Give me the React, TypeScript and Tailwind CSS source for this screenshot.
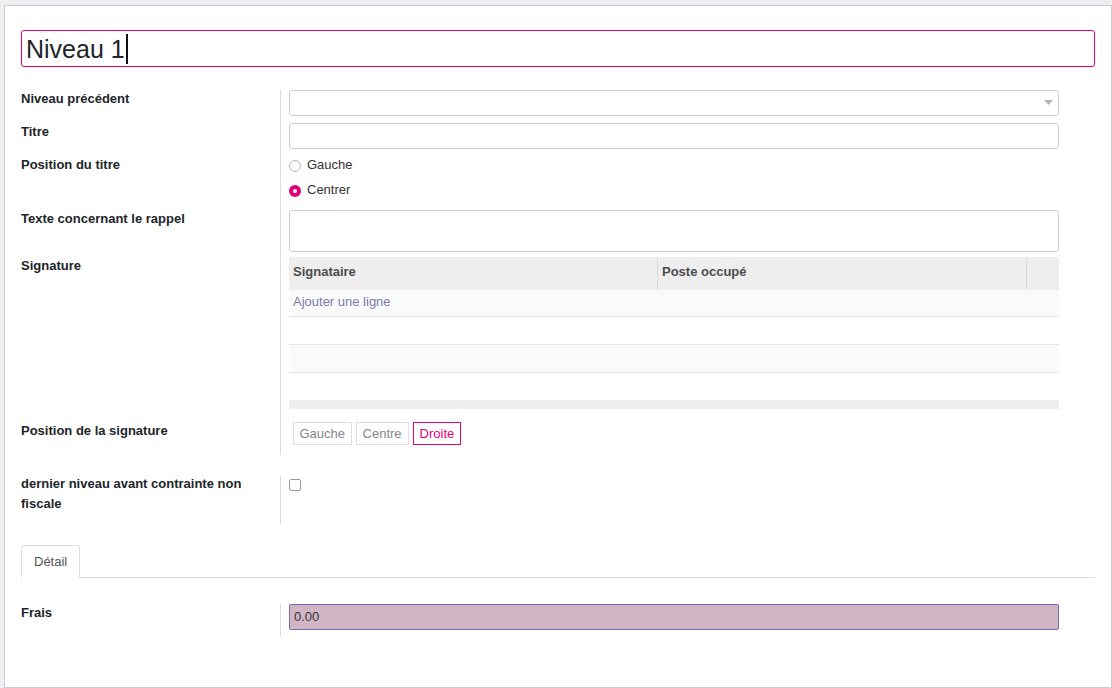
import React from 'react';

const MAGENTA = '#e0007a';

interface RowProps {
  label: React.ReactNode;
  children?: React.ReactNode;
  className?: string;
  labelClass?: string;
}

const Row: React.FC<RowProps> = ({ label, children, className = '', labelClass = 'pt-[1px]' }) => (
  <div className={`flex ${className}`}>
    <div className={`w-[259px] shrink-0 pr-[8px] font-bold text-[13px] leading-[16px] text-[#212529] ${labelClass}`}>
      {label}
    </div>
    <div className="w-[778px] border-l border-[#dcdcdc] pl-[8px]">{children}</div>
  </div>
);

const inputCls = 'h-[26px] w-[770px] border border-[#cfcfcf] rounded-[3px] bg-white';

const App: React.FC = () => {
  return (
    <div
      className="w-[1112px] h-[688px] bg-[#efeff1] pt-[5px] pl-[4px] overflow-hidden"
      style={{ fontFamily: '"Liberation Sans", Arial, sans-serif' }}
    >
      <div className="w-[1108px] h-[683px] bg-white border border-[#cacad2] px-[16px] pt-[24px]">
        {/* title */}
        <div
          className="h-[37px] w-[1074px] rounded-[3px] border flex items-center pl-[4px]"
          style={{ borderColor: MAGENTA }}
        >
          <span className="text-[25px] leading-[30px] text-[#212529]">Niveau 1</span>
          <span className="ml-[1px] w-[2px] h-[30px] bg-[#111]" />
        </div>

        <div className="mt-[23px]">
          <Row label="Niveau précédent" className="h-[33px]">
            <div className={`${inputCls} relative`}>
              <svg className="absolute right-[5px] top-[9px]" width="9" height="6" viewBox="0 0 9 6">
                <path d="M0 0 L9 0 L4.5 5 Z" fill="#b5b5b5" />
              </svg>
            </div>
          </Row>
          <Row label="Titre" className="h-[33px]">
            <div className={inputCls} />
          </Row>
          <Row label="Position du titre" className="h-[54px]">
            <div className="flex flex-col text-[13px] text-[#333] leading-[16px]">
              <label className="flex items-center h-[18px]">
                <span className="w-[12px] h-[12px] rounded-full border border-[#b8b8b8] mt-[2px]" />
                <span className="ml-[6px]">Gauche</span>
              </label>
              <label className="flex items-center h-[18px] mt-[7px]">
                <span
                  className="w-[12px] h-[12px] rounded-full flex items-center justify-center mt-[2px]"
                  style={{ backgroundColor: MAGENTA }}
                >
                  <span className="w-[4px] h-[4px] rounded-full bg-white" />
                </span>
                <span className="ml-[6px]">Centrer</span>
              </label>
            </div>
          </Row>
          <Row label="Texte concernant le rappel" className="h-[47px]">
            <div className="h-[42px] w-[770px] border border-[#cfcfcf] rounded-[3px]" />
          </Row>
          <Row label="Signature" className="h-[165px]">
            <div className="w-[770px] text-[13px]">
              <div className="flex h-[33px] bg-[#eeeeee] font-bold text-[#4c4c4c]">
                <div className="w-[369px] h-full flex items-center pl-[4px] pb-[3px] border-r border-[#dadada]">Signataire</div>
                <div className="w-[369px] h-full flex items-center pl-[4px] pb-[3px] border-r border-[#dadada]">Poste occupé</div>
                <div className="flex-1" />
              </div>
              <div className="h-[27px] bg-[#fafafa] border-b border-[#e6e6e6] flex items-center pl-[4px] pb-[2px] text-[#7c7bad]">
                Ajouter une ligne
              </div>
              <div className="h-[28px] bg-white border-b border-[#e6e6e6]" />
              <div className="h-[28px] bg-[#fafafa] border-b border-[#e6e6e6]" />
              <div className="h-[27px] bg-white" />
              <div className="h-[9px] bg-[#eeeeee]" />
            </div>
          </Row>
          <Row label="Position de la signature" className="h-[33px]">
            <div className="flex gap-[4px] pl-[4px] text-[13px] leading-[16px]">
              <span className="h-[23px] px-[5.5px] flex items-center border border-[#dedede] text-[#888]">Gauche</span>
              <span className="h-[23px] px-[6px] flex items-center border border-[#dedede] text-[#888]">Centre</span>
              <span
                className="h-[23px] px-[6px] flex items-center border"
                style={{ borderColor: MAGENTA, color: MAGENTA }}
              >
                Droite
              </span>
            </div>
          </Row>
          <Row
            label="dernier niveau avant contrainte non fiscale"
            className="h-[48px] mt-[21px]"
            labelClass="leading-[20px] -mt-[2px]"
          >
            <div className="w-[12px] h-[12px] mt-[3px] border border-[#9a9a9a] rounded-[2px] bg-white" />
          </Row>
        </div>

        {/* tabs */}
        <div className="mt-[21px] w-[1074px] border-b border-[#dedede] flex">
          <div className="h-[33px] -mb-px px-[12px] flex items-center border border-[#dedede] border-b-white bg-white rounded-t-[3px] text-[13px] text-[#555]">
            Détail
          </div>
        </div>

        <div className="mt-[26px]">
          <Row label="Frais" className="h-[33px]">
            <div className="h-[26px] w-[770px] rounded-[2px] border border-[#7b6aae] bg-[#d1b5c4] flex items-center pl-[4px] pb-[1px] text-[13px] text-[#333]">
              0.00
            </div>
          </Row>
        </div>
      </div>
    </div>
  );
};

export default App;
